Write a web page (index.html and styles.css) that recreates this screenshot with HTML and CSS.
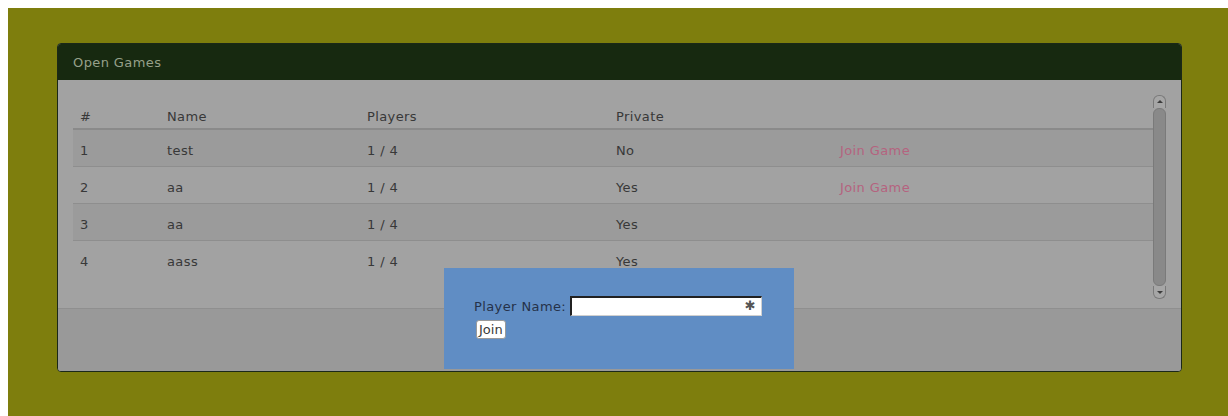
FILE: index.html
```html
<!DOCTYPE html>
<html lang="en">
<head>
<meta charset="utf-8">
<title>Open Games</title>
<link rel="stylesheet" href="styles.css">
</head>
<body>
<div class="stage">
  <section class="panel">
    <header class="panel-head">Open Games</header>
    <div class="panel-body">
      <div class="list">
        <table class="games">
          <thead>
            <tr><th class="c-num">#</th><th class="c-name">Name</th><th class="c-players">Players</th><th class="c-private">Private</th><th class="c-action"></th></tr>
          </thead>
          <tbody>
            <tr class="odd"><td>1</td><td>test</td><td>1 / 4</td><td>No</td><td><a class="join" href="#">Join Game</a></td></tr>
            <tr><td>2</td><td>aa</td><td>1 / 4</td><td>Yes</td><td><a class="join" href="#">Join Game</a></td></tr>
            <tr class="odd"><td>3</td><td>aa</td><td>1 / 4</td><td>Yes</td><td></td></tr>
            <tr><td>4</td><td>aass</td><td>1 / 4</td><td>Yes</td><td></td></tr>
          </tbody>
        </table>
        <div class="scrollbar">
          <span class="sb-btn sb-up"></span>
          <span class="sb-thumb"></span>
          <span class="sb-btn sb-down"></span>
        </div>
      </div>
    </div>
    <footer class="panel-foot"></footer>

    <form class="join-dialog">
      <div class="field">
        <label for="player">Player Name:</label>
        <span class="input-wrap"><input id="player" type="text"><span class="req">&#x2731;</span></span>
      </div>
      <button type="button" class="btn">Join</button>
    </form>
  </section>
</div>
</body>
</html>
```

FILE: styles.css
```css
html, body {
  margin: 0;
  padding: 0;
  background: #ffffff;
}

body {
  padding: 8px 0 0 8px;
  font-family: "DejaVu Sans", "Liberation Sans", sans-serif;
  font-size: 13px;
  letter-spacing: 0.4px;
}

.stage {
  background: #7e7e0d;
  min-height: 408px;
  padding: 35px 38px 0 49px;
  box-sizing: border-box;
}

.panel {
  position: relative;
  width: 1125px;
  height: 329px;
  box-sizing: border-box;
  border: 1px solid #1b2818;
  border-radius: 4px;
  background: #a2a2a2;
  display: flex;
  flex-direction: column;
  overflow: hidden;
}

.panel-head {
  height: 36px;
  flex: none;
  background: #172910;
  color: #96a08a;
  padding: 0 15px;
  line-height: 38px;
  font-size: 13px;
}

.panel-body {
  height: 229px;
  flex: none;
  padding: 13px 15px 0 15px;
  box-sizing: border-box;
  border-bottom: 1px solid #8f8f8f;
}

.list {
  display: flex;
  height: 206px;
}

.games {
  flex: 1;
  align-self: flex-start;
  border-collapse: collapse;
  table-layout: fixed;
  color: #383838;
}

.games th,
.games td {
  height: 32px;
  padding: 4px 7px 0 7px;
  text-align: left;
  font-weight: normal;
  border-bottom: 1px solid #8e8e8e;
}

.games thead th {
  border-bottom: 2px solid #8a8a8a;
  height: 31px;
  vertical-align: bottom;
  padding: 0 7px 4px 7px;
}

.games tbody tr:last-child td {
  border-bottom: none;
}

.games tr.odd td {
  background: #9b9b9b;
}

.c-num { width: 73px; }
.c-name { width: 186px; }
.c-players { width: 235px; }
.c-private { width: 210px; }

.join {
  color: #b5637f;
  text-decoration: none;
}

/* hand-drawn vertical scrollbar */
.scrollbar {
  width: 13px;
  flex: none;
  display: flex;
  flex-direction: column;
  margin-top: 2px;
}

.sb-btn {
  height: 13px;
  flex: none;
  box-sizing: border-box;
  border: 1px solid #7a7a7a;
  background: #a6a6a6;
  position: relative;
}

.sb-up {
  border-radius: 6px 6px 0 0;
  border-bottom: none;
}

.sb-down {
  border-radius: 0 0 6px 6px;
  border-top: none;
}

.sb-btn::after {
  content: "";
  position: absolute;
  left: 3px;
  border-left: 3px solid transparent;
  border-right: 3px solid transparent;
}

.sb-up::after {
  top: 4px;
  border-bottom: 3px solid #3c3c3c;
}

.sb-down::after {
  bottom: 4px;
  border-top: 3px solid #3c3c3c;
}

.sb-thumb {
  flex: 1;
  box-sizing: border-box;
  background: #898989;
  border: 1px solid #7a7a7a;
  border-radius: 6px;
}

.panel-foot {
  flex: 1;
  background: #999999;
}

/* join dialog over the list */
.join-dialog {
  position: absolute;
  left: 386px;
  top: 224px;
  width: 350px;
  height: 101px;
  box-sizing: border-box;
  margin: 0;
  padding: 28px 30px 0 30px;
  background: #608dc4;
  color: #25324a;
}

.field {
  display: flex;
  align-items: center;
  gap: 4px;
}

.field label {
  font-size: 13px;
}

.input-wrap {
  position: relative;
  display: inline-block;
}

.input-wrap input {
  width: 192px;
  height: 20px;
  box-sizing: border-box;
  margin: 0;
  border: 2px inset #767676;
  border-right: 1px solid #d0d0d0;
  border-bottom: 1px solid #d0d0d0;
  background: #ffffff;
  padding: 0 22px 0 3px;
  font: inherit;
}

.req {
  position: absolute;
  right: 6px;
  top: 2px;
  font-size: 13px;
  line-height: 16px;
  color: #555555;
}

.btn {
  margin: 4px 0 0 2px;
  height: 19px;
  padding: 0 2px;
  border: 1px solid #9a9a9a;
  border-radius: 3px;
  background: #ffffff;
  color: #3a3a3a;
  font: inherit;
  font-size: 13px;
  line-height: 17px;
  cursor: pointer;
}
```
